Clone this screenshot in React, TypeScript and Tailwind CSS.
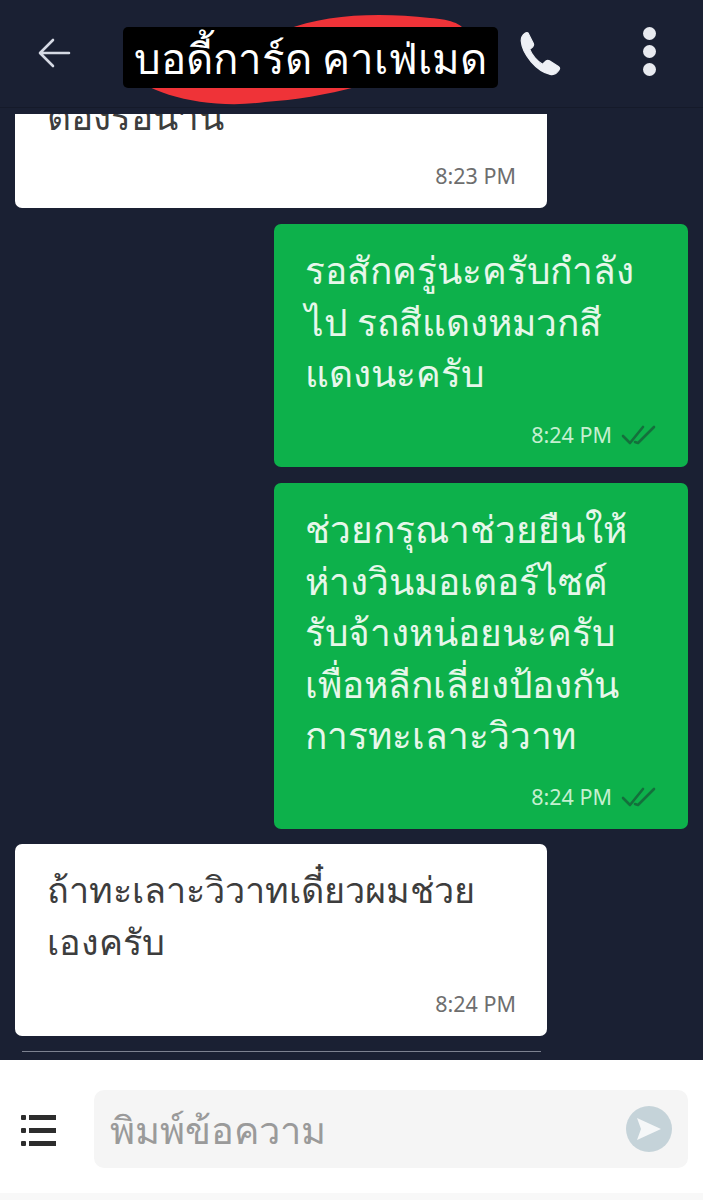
import React from "react";

const font = "font-['Noto_Sans','Liberation_Sans',sans-serif]";

function Checks() {
  return (
    <svg width="36" height="22" viewBox="0 0 36 22" fill="none" stroke="#14703c" strokeWidth="2.6" strokeLinecap="round" strokeLinejoin="round">
      <path d="M2 12 L9 19 L22 3" />
      <path d="M14 18 L17 19 L33 3" />
    </svg>
  );
}

function Green({ lines, h }: { lines: string[]; h: string }) {
  return (
    <div className={`ml-auto mr-[15px] w-[414px] ${h} bg-[#0db14b] rounded-[7px] pl-[31px] pr-[20px] pt-[20px] flex flex-col`}>
      {lines.map((l) => (
        <div key={l} className="text-[37px] leading-[51.5px] text-[#e6f7ea] whitespace-nowrap">{l}</div>
      ))}
      <div className="mt-auto mb-[18px] mr-[11px] flex items-center justify-end gap-[9px] text-[21.5px] leading-[28px] text-[#c4efd0]">
        <span>8:24 PM</span>
        <Checks />
      </div>
    </div>
  );
}

export default function App() {
  return (
    <div className={`w-[703px] h-[1200px] bg-[#1a2033] flex flex-col overflow-hidden ${font}`}>
      <header className="h-[108px] shrink-0 relative flex items-center justify-between pl-[37px] pr-[47px] border-b border-[#151a2a]">
        <svg className="absolute left-[100px] top-[10px]" width="400" height="100" viewBox="0 0 400 100">
          <path d="M28 60 C45 85 110 100 165 92 C225 88 290 72 350 40 C378 24 365 10 330 8 C280 2 225 4 185 20 C130 28 50 40 28 60 Z" fill="#ef3338" />
        </svg>
        <svg className="relative" width="36" height="36" viewBox="0 0 36 36" fill="none" stroke="#d5d9e4" strokeWidth="2.6" strokeLinecap="round" strokeLinejoin="round">
          <path d="M32 17 H4 M16 4 L3 17 L16 30" />
        </svg>
        <div className="absolute left-[123px] top-[27px] w-[375px] h-[61px] bg-black rounded-[5px] flex items-center justify-center text-white text-[42px] leading-[61px] font-medium whitespace-nowrap">
          บอดี้การ์ด คาเฟ่เมด
        </div>
        <div className="relative flex items-center gap-[80px]">
          <svg width="48" height="48" viewBox="0 0 24 24" fill="#eef0f5" stroke="#eef0f5" strokeWidth="0.6" strokeLinejoin="round">
            <path d="M6.6 1.6 L9.2 6.8 C9.5 7.4 9.4 8 8.9 8.4 L7.4 9.7 C8.4 12.4 11.2 15.8 13.8 17.1 L15.5 15.5 C16 15.1 16.6 15 17.2 15.4 L21.7 18.3 C22.3 18.7 22.4 19.4 22 20 C21 21.6 19.4 22.6 17.6 22.2 C10.8 20.6 3.6 12.2 3.1 5.4 C3 3.8 3.9 2.4 5.2 1.5 C5.7 1.2 6.3 1.2 6.6 1.6 Z" />
          </svg>
          <div className="flex flex-col gap-[5px] mb-[4px]">
            <span className="w-[13px] h-[13px] rounded-full bg-[#e8eaf0]" />
            <span className="w-[13px] h-[13px] rounded-full bg-[#e8eaf0]" />
            <span className="w-[13px] h-[13px] rounded-full bg-[#e8eaf0]" />
          </div>
        </div>
      </header>

      <main className="flex-1 mt-[6px] overflow-hidden flex flex-col">
        <div className="ml-[15px] w-[532px] h-[94px] shrink-0 bg-white rounded-b-[7px] overflow-hidden relative px-[32px]">
          <div className="-mt-[24px] text-[37px] leading-[52px] text-[#3d3d3d] whitespace-nowrap">ต้องรอนาน</div>
          <div className="absolute right-[31px] bottom-[18px] text-[21.5px] leading-[28px] text-[#6e6e6e]">8:23 PM</div>
        </div>
        <div className="mt-[16px] shrink-0"><Green h="h-[243px]" lines={["รอสักครู่นะครับกำลัง", "ไป รถสีแดงหมวกสี", "แดงนะครับ"]} /></div>
        <div className="mt-[16px] shrink-0"><Green h="h-[346px]" lines={["ช่วยกรุณาช่วยยืนให้", "ห่างวินมอเตอร์ไซค์", "รับจ้างหน่อยนะครับ", "เพื่อหลีกเลี่ยงป้องกัน", "การทะเลาะวิวาท"]} /></div>
        <div className="mt-[15px] ml-[15px] w-[532px] h-[192px] shrink-0 bg-white rounded-[7px] pl-[32px] pt-[20px] flex flex-col">
          <div className="text-[36px] leading-[52px] text-[#3d3d3d] whitespace-nowrap">ถ้าทะเลาะวิวาทเดี๋ยวผมช่วย</div>
          <div className="text-[36px] leading-[52px] text-[#3d3d3d] whitespace-nowrap">เองครับ</div>
          <div className="mt-auto mb-[18px] mr-[31px] self-end text-[21.5px] leading-[28px] text-[#6e6e6e]">8:24 PM</div>
        </div>
        <div className="mt-[15px] ml-[22px] w-[519px] h-[1px] bg-[#7c8190] shrink-0" />
      </main>

      <footer className="h-[140px] shrink-0 bg-white flex items-start border-b-[7px] border-[#f8f8f8]">
        <div className="mt-[55px] ml-[21px] w-[37px] flex flex-col gap-[8px]">
          {[0, 1, 2].map((i) => (
            <div key={i} className="flex items-center gap-[3px]">
              <span className="w-[5px] h-[5px] bg-[#2d2d2d] rounded-[1px]" />
              <span className="w-[27px] h-[5px] bg-[#2d2d2d]" />
            </div>
          ))}
        </div>
        <div className="mt-[30px] ml-[36px] w-[594px] h-[78px] bg-[#f5f5f5] rounded-[10px] flex items-center justify-between pl-[16px] pr-[16px]">
          <span className="text-[38px] leading-[52px] text-[#9a9a9a] whitespace-nowrap">พิมพ์ข้อความ</span>
          <div className="w-[46px] h-[46px] rounded-full bg-[#c5d3d9] flex items-center justify-center">
            <svg width="26" height="24" viewBox="0 0 26 24" fill="#f5f7f8">
              <path d="M1 1 L25 12 L1 23 L5 12 Z" />
            </svg>
          </div>
        </div>
      </footer>
    </div>
  );
}
